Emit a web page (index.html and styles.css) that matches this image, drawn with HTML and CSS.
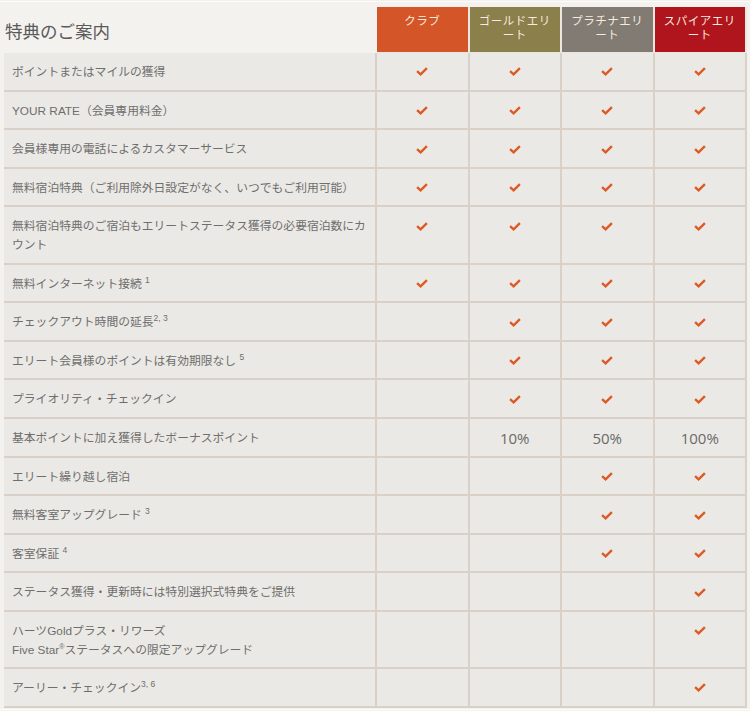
FILE: index.html
```html
<!DOCTYPE html>
<html lang="ja">
<head>
<meta charset="utf-8">
<title>特典のご案内</title>
<link rel="stylesheet" href="styles.css">
</head>
<body>
<svg class="defs" width="0" height="0" aria-hidden="true">
  <symbol id="chk" viewBox="0 0 12 9">
    <path d="M1.1 4.1 L4.6 7.3 L10.9 1.1" fill="none" stroke="#dc5a26" stroke-width="2.4"/>
  </symbol>
</svg>
<table class="benefits">
  <colgroup>
    <col class="col-label">
    <col class="col-tier">
    <col class="col-tier">
    <col class="col-tier">
    <col class="col-tier">
  </colgroup>
  <thead>
    <tr>
      <th class="title">特典のご案内</th>
      <th class="tier club">クラブ</th>
      <th class="tier gold">ゴールドエリート</th>
      <th class="tier plat">プラチナエリート</th>
      <th class="tier spire">スパイアエリート</th>
    </tr>
  </thead>
  <tbody>
    <tr>
      <td class="label">ポイントまたはマイルの獲得</td>
      <td class="c"><svg class="ck"><use href="#chk"/></svg></td>
      <td class="c"><svg class="ck"><use href="#chk"/></svg></td>
      <td class="c"><svg class="ck"><use href="#chk"/></svg></td>
      <td class="c"><svg class="ck"><use href="#chk"/></svg></td>
    </tr>
    <tr>
      <td class="label">YOUR RATE（会員専用料金）</td>
      <td class="c"><svg class="ck"><use href="#chk"/></svg></td>
      <td class="c"><svg class="ck"><use href="#chk"/></svg></td>
      <td class="c"><svg class="ck"><use href="#chk"/></svg></td>
      <td class="c"><svg class="ck"><use href="#chk"/></svg></td>
    </tr>
    <tr>
      <td class="label">会員様専用の電話によるカスタマーサービス</td>
      <td class="c"><svg class="ck"><use href="#chk"/></svg></td>
      <td class="c"><svg class="ck"><use href="#chk"/></svg></td>
      <td class="c"><svg class="ck"><use href="#chk"/></svg></td>
      <td class="c"><svg class="ck"><use href="#chk"/></svg></td>
    </tr>
    <tr>
      <td class="label">無料宿泊特典（ご利用除外日設定がなく、いつでもご利用可能）</td>
      <td class="c"><svg class="ck"><use href="#chk"/></svg></td>
      <td class="c"><svg class="ck"><use href="#chk"/></svg></td>
      <td class="c"><svg class="ck"><use href="#chk"/></svg></td>
      <td class="c"><svg class="ck"><use href="#chk"/></svg></td>
    </tr>
    <tr>
      <td class="label">無料宿泊特典のご宿泊もエリートステータス獲得の必要宿泊数にカウント</td>
      <td class="c"><svg class="ck"><use href="#chk"/></svg></td>
      <td class="c"><svg class="ck"><use href="#chk"/></svg></td>
      <td class="c"><svg class="ck"><use href="#chk"/></svg></td>
      <td class="c"><svg class="ck"><use href="#chk"/></svg></td>
    </tr>
    <tr>
      <td class="label">無料インターネット接続 <sup>1</sup></td>
      <td class="c"><svg class="ck"><use href="#chk"/></svg></td>
      <td class="c"><svg class="ck"><use href="#chk"/></svg></td>
      <td class="c"><svg class="ck"><use href="#chk"/></svg></td>
      <td class="c"><svg class="ck"><use href="#chk"/></svg></td>
    </tr>
    <tr>
      <td class="label">チェックアウト時間の延長<sup>2, 3</sup></td>
      <td class="c"></td>
      <td class="c"><svg class="ck"><use href="#chk"/></svg></td>
      <td class="c"><svg class="ck"><use href="#chk"/></svg></td>
      <td class="c"><svg class="ck"><use href="#chk"/></svg></td>
    </tr>
    <tr>
      <td class="label">エリート会員様のポイントは有効期限なし <sup>5</sup></td>
      <td class="c"></td>
      <td class="c"><svg class="ck"><use href="#chk"/></svg></td>
      <td class="c"><svg class="ck"><use href="#chk"/></svg></td>
      <td class="c"><svg class="ck"><use href="#chk"/></svg></td>
    </tr>
    <tr>
      <td class="label">プライオリティ・チェックイン</td>
      <td class="c"></td>
      <td class="c"><svg class="ck"><use href="#chk"/></svg></td>
      <td class="c"><svg class="ck"><use href="#chk"/></svg></td>
      <td class="c"><svg class="ck"><use href="#chk"/></svg></td>
    </tr>
    <tr>
      <td class="label">基本ポイントに加え獲得したボーナスポイント</td>
      <td class="c"></td>
      <td class="c pct">10%</td>
      <td class="c pct">50%</td>
      <td class="c pct">100%</td>
    </tr>
    <tr>
      <td class="label">エリート繰り越し宿泊</td>
      <td class="c"></td>
      <td class="c"></td>
      <td class="c"><svg class="ck"><use href="#chk"/></svg></td>
      <td class="c"><svg class="ck"><use href="#chk"/></svg></td>
    </tr>
    <tr>
      <td class="label">無料客室アップグレード <sup>3</sup></td>
      <td class="c"></td>
      <td class="c"></td>
      <td class="c"><svg class="ck"><use href="#chk"/></svg></td>
      <td class="c"><svg class="ck"><use href="#chk"/></svg></td>
    </tr>
    <tr>
      <td class="label">客室保証 <sup>4</sup></td>
      <td class="c"></td>
      <td class="c"></td>
      <td class="c"><svg class="ck"><use href="#chk"/></svg></td>
      <td class="c"><svg class="ck"><use href="#chk"/></svg></td>
    </tr>
    <tr>
      <td class="label">ステータス獲得・更新時には特別選択式特典をご提供</td>
      <td class="c"></td>
      <td class="c"></td>
      <td class="c"></td>
      <td class="c"><svg class="ck"><use href="#chk"/></svg></td>
    </tr>
    <tr>
      <td class="label">ハーツGoldプラス・リワーズ<br>Five Star<sup class="reg">®</sup>ステータスへの限定アップグレード</td>
      <td class="c"></td>
      <td class="c"></td>
      <td class="c"></td>
      <td class="c"><svg class="ck"><use href="#chk"/></svg></td>
    </tr>
    <tr>
      <td class="label">アーリー・チェックイン<sup>3, 6</sup></td>
      <td class="c"></td>
      <td class="c"></td>
      <td class="c"></td>
      <td class="c"><svg class="ck"><use href="#chk"/></svg></td>
    </tr>
  </tbody>
</table>
</body>
</html>
```

FILE: styles.css
```css
html, body {
  margin: 0;
  padding: 0;
}

body {
  background: linear-gradient(#f3f1ed 0 1px, #fdfcfa 1px 2px, #f4f2ee 2px);
  font-family: "Liberation Sans", "Noto Sans CJK JP", sans-serif;
  padding-top: 7px;
}

.defs {
  position: absolute;
  width: 0;
  height: 0;
  overflow: hidden;
}

.benefits {
  border-collapse: separate;
  border-spacing: 0;
  table-layout: fixed;
  width: 743px;
  margin-left: 4px;
}

.col-label {
  width: 373px;
}

.benefits th,
.benefits td {
  box-sizing: border-box;
}

.title {
  text-align: left;
  vertical-align: bottom;
  font-weight: normal;
  font-size: 17.5px;
  line-height: 22px;
  color: #5a5a5a;
  padding: 0 0 9px 1px;
  border-bottom: 1px solid transparent;
}

.tier {
  height: 46px;
  vertical-align: top;
  text-align: center;
  font-weight: normal;
  font-size: 11.5px;
  line-height: 13.5px;
  letter-spacing: 0.5px;
  color: #f5ebde;
  padding: 8px 8px 0;
  border-right: 2px solid #ebe7e1;
  border-bottom: 1px solid #e9e5df;
}

.club { background: #d35528; }
.gold { background: #8b7f4b; }
.plat { background: #817b74; }
.spire { background: #b0151e; }

.benefits td {
  background: #ebe9e5;
  border-right: 2px solid #d9d1c7;
  border-bottom: 2px solid #d9d1c7;
  padding: 10px 0 8px;
  vertical-align: top;
  font-size: 11.8px;
  line-height: 18.6px;
  color: #6e6e6e;
}

.benefits td.label {
  text-align: left;
  padding-left: 8px;
  padding-right: 6px;
}

.benefits td.c {
  text-align: center;
}

.ck {
  display: inline-block;
  width: 12px;
  height: 9px;
  vertical-align: middle;
  position: relative;
  top: -1px;
}

.benefits td.pct {
  font-family: "Open Sans", sans-serif;
  font-weight: 500;
  font-size: 15px;
  color: #6a6a6a;
}

sup {
  font-size: 8.5px;
  line-height: 0;
  vertical-align: 5px;
}

sup.reg {
  font-size: 7px;
  vertical-align: 5px;
}
```
